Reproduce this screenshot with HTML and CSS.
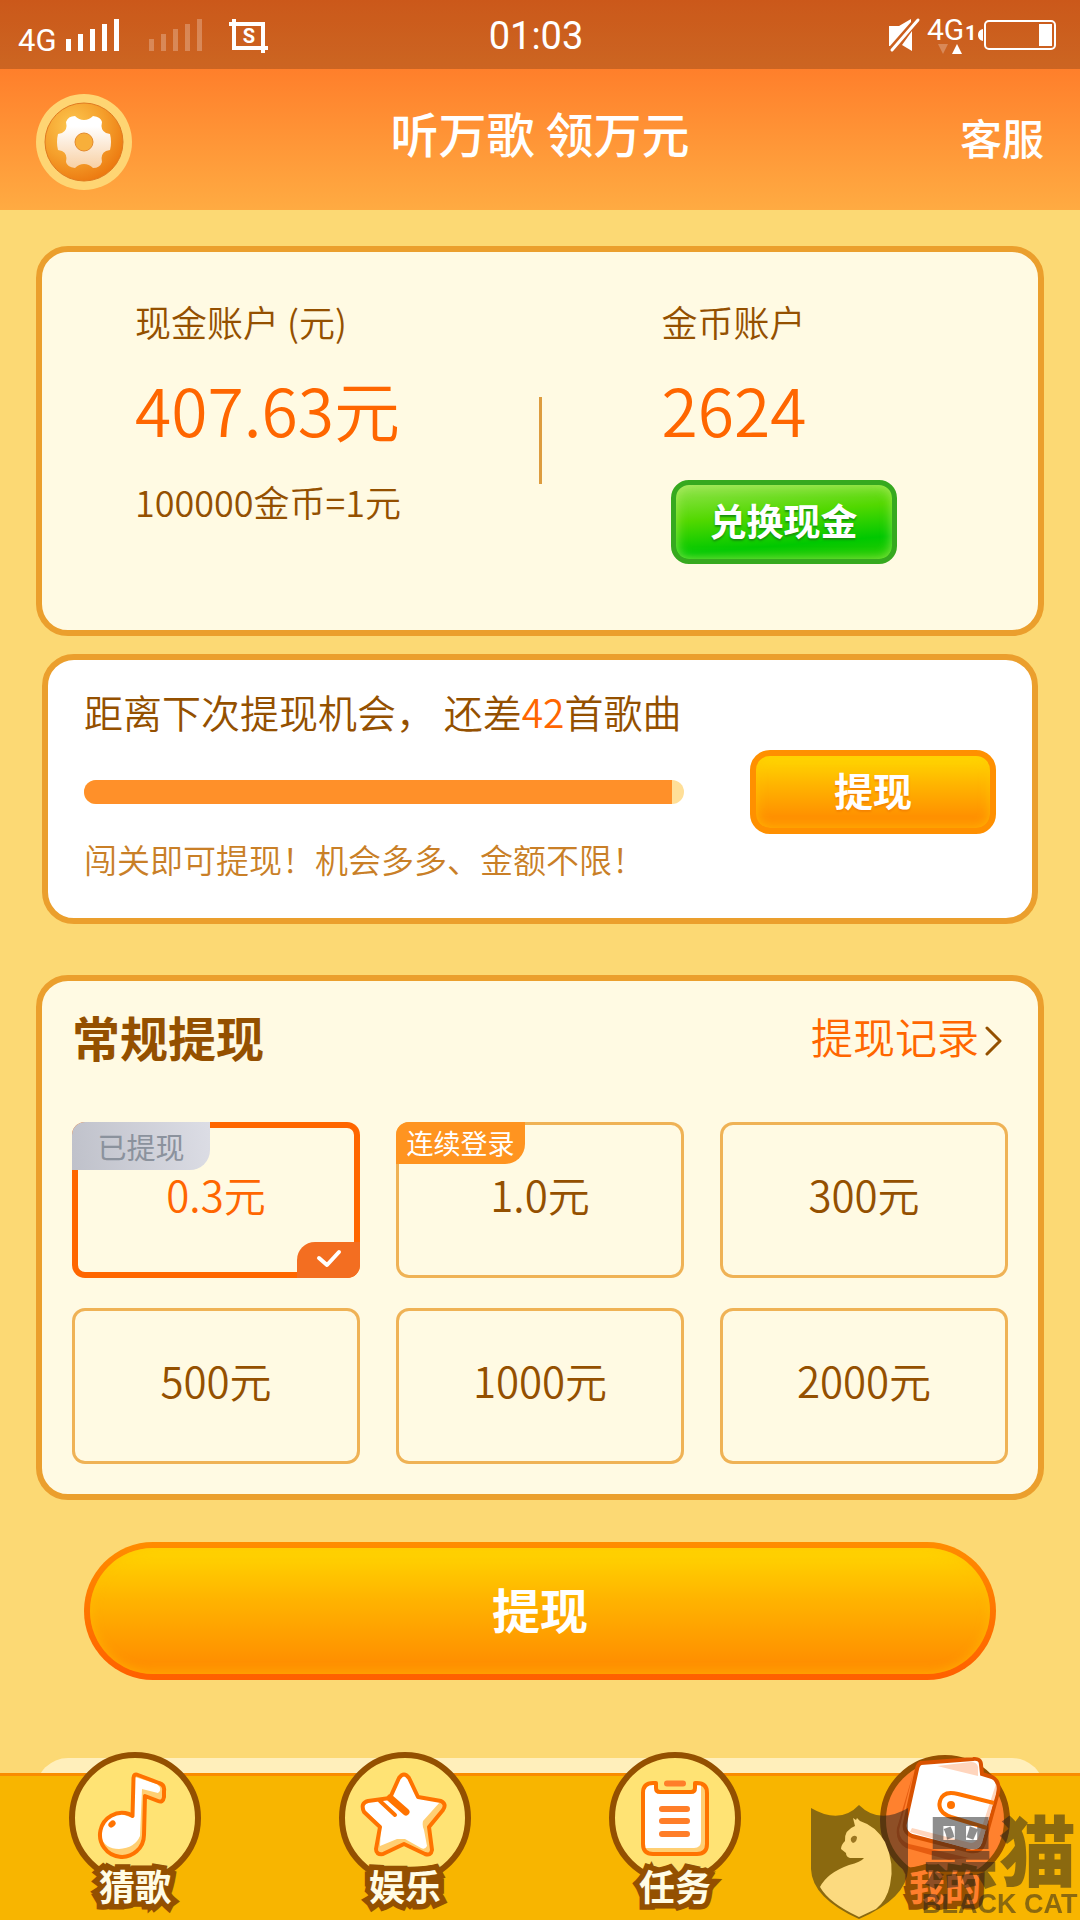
FILE: index.html
```html
<!DOCTYPE html>
<html lang="zh-CN">
<head>
    <meta charset="UTF-8">
    <meta name="viewport" content="width=device-width, initial-scale=1.0">
    <title>听万歌 领万元</title>
    <link rel="stylesheet" href="styles.css">
</head>
<body>
    <header class="top">
        <div class="status-bar">
            <svg class="status-left" width="256" height="48" viewBox="-4 -4 256 48">
                <text x="0" y="36" font-size="31">4G</text>
                <path d="M48 24h5v12h-5zM60 19h5v17h-5zM72 14h5v22h-5zM84 9h5v27h-5zM96 4h5v32h-5z"/>
                <path opacity=".25" d="M131 24h5v12h-5zM143 19h5v17h-5zM155 14h5v22h-5zM167 9h5v27h-5zM179 4h5v32h-5z"/>
                <path fill="none" stroke="#fff" stroke-width="4" d="M211 9h34v29M216 4v29h34"/>
                <text x="231" y="28" font-size="20" font-weight="700" text-anchor="middle">S</text>
            </svg>
            <span class="clock">01:03</span>
            <svg class="status-right" width="172" height="52" viewBox="0 -6 172 52">
                <path d="M3 11h10l12-7v3L4 31H3zM26 16v20l-10-6z"/>
                <path stroke="#fff" stroke-width="3" stroke-linecap="round" d="M6 35L32 5"/>
                <text x="41" y="25" font-size="30">4G</text>
                <text x="79" y="25" font-size="20" font-weight="700">1</text>
                <path opacity=".25" d="M52 29h10l-5 10z"/>
                <path d="M66 39h10l-5-10z"/>
                <path d="M97 14q-5 1-5 6t5 6z"/>
                <rect x="99" y="6" width="70" height="28" rx="4" fill="none" stroke="#fff" stroke-width="2"/>
                <path d="M153 9h13v22h-13z"/>
            </svg>
        </div>
        <div class="title-bar">
            <button class="settings" aria-label="设置">
                <svg width="96" height="96" viewBox="0 0 96 96">
                    <defs>
                        <radialGradient id="coin" cx=".35" cy=".3" r=".75">
                            <stop offset="0" stop-color="#fcc750"/>
                            <stop offset=".55" stop-color="#f5a02c"/>
                            <stop offset="1" stop-color="#ec780f"/>
                        </radialGradient>
                        <linearGradient id="gear" x1="0" y1="0" x2="0" y2="1">
                            <stop offset=".2" stop-color="#fff"/>
                            <stop offset="1" stop-color="#f8d0a4"/>
                        </linearGradient>
                    </defs>
                    <circle cx="48" cy="48" r="48" fill="#fed573"/>
                    <circle cx="48" cy="48" r="39" fill="url(#coin)" stroke="#e07a20"/>
                    <path fill="url(#gear)" d="M39 22Q43 26 48 26T57 22Q65 23 66 28Q64 36 70 39L74 40Q76 48 74 56L70 57Q64 60 66 68Q64 74 57 74Q53 70 48 70T39 74Q31 73 30 68Q32 60 26 57L22 56Q20 48 22 40L26 39Q32 36 30 28Q32 22 39 22Z"/>
                    <circle cx="48" cy="48" r="9" fill="#f8af3a" stroke="#e48b2c"/>
                </svg>
            </button>
            <h1>听万歌 领万元</h1>
            <a class="service" href="#">客服</a>
        </div>
    </header>

    <main>
        <section class="card accounts">
            <div class="account">
                <p class="label">现金账户 (元)</p>
                <p class="amount">407.63元</p>
                <p class="rate">100000金币=1元</p>
            </div>
            <div class="divider"></div>
            <div class="account coins">
                <p class="label">金币账户</p>
                <p class="amount">2624</p>
                <button class="btn-green">兑换现金</button>
            </div>
        </section>

        <section class="card chance">
            <div class="chance-info">
                <p class="chance-title">距离下次提现机会， 还差<em>42</em>首歌曲</p>
                <div class="progress"><div class="progress-fill" style="width: 98%"></div></div>
                <p class="chance-tip">闯关即可提现<span class="mark">！</span>机会多多、金额不限<span class="mark">！</span></p>
            </div>
            <button class="btn-orange">提现</button>
        </section>

        <section class="card withdraw">
            <div class="withdraw-head">
                <h2>常规提现</h2>
                <a class="record" href="#">提现记录
                    <svg width="18" height="30" viewBox="0 0 18 30"><path d="M2 2l13 13L2 28"/></svg>
                </a>
            </div>
            <div class="options">
                <label class="option">
                    <input type="radio" name="money" checked>
                    <span class="tag tag-done">已提现</span>
                    0.3元
                    <svg class="check" width="63" height="36" viewBox="0 0 63 36"><path d="M22 16l8 7L42 10"/></svg>
                </label>
                <label class="option">
                    <input type="radio" name="money">
                    <span class="tag tag-login">连续登录</span>
                    1.0元
                </label>
                <label class="option"><input type="radio" name="money">300元</label>
                <label class="option"><input type="radio" name="money">500元</label>
                <label class="option"><input type="radio" name="money">1000元</label>
                <label class="option"><input type="radio" name="money">2000元</label>
            </div>
        </section>

        <button class="btn-submit">提现</button>

        <section class="next-panel"></section>
    </main>

    <nav class="tabs">
        <a class="tab" href="#">
            <svg width="132" height="132" viewBox="0 0 132 132">
                <circle class="ring" cx="66" cy="66" r="63"/>
                <path fill="#ffcf73" d="M63.500 64L64.500 26Q65 21 69 23L90 31Q96 33 95 39L95 45Q94 51 89 49L76 44L75 83A22 22 0 1 1 60 62Z"/>
                <path fill="#fff" d="M64 66L66 25L88 32Q94 37 89 41L73 37L71 84Q66 96 50 97Q36 97 32 85Q32 63 52 62Z"/>
                <path class="line" d="M63.500 64L64.500 26Q65 21 69 23L90 31Q96 33 95 39L95 45Q94 51 89 49L76 44L75 83A22 22 0 1 1 60 62Z"/>
                <ellipse cx="43" cy="72" rx="4" ry="3" transform="rotate(-40 43 72)" fill="#ff7300"/>
            </svg>
            <span>猜歌</span>
        </a>
        <a class="tab" href="#">
            <svg width="132" height="132" viewBox="0 0 132 132">
                <circle class="ring" cx="66" cy="66" r="63"/>
                <path fill="#ffcf73" d="M60 26Q65 19 70 26L79 45L102 49Q108 52 104 58L90 75L93 98Q92 104 86 102L65 92L44 102Q37 103 37 97L41 75L25 60Q21 51 29 49L51 46Z"/>
                <path fill="#fff" d="M60 27Q65 20 70 27L79 46L101 50L84 69Q83 74 85 78L88 94Q86 98 82 96L66 87L58 87L41 94L42 74L26 58Q22 51 30 50L51 47Z"/>
                <path class="line" d="M60 26Q65 19 70 26L79 45L102 49Q108 52 104 58L90 75L93 98Q92 104 86 102L65 92L44 102Q37 103 37 97L41 75L25 60Q21 51 29 49L51 46Z"/>
                <path class="line" stroke-linecap="round" d="M41 49L56 63"/>
                <path class="line thick" stroke-linecap="round" d="M51 46L67 60"/>
            </svg>
            <span>娱乐</span>
        </a>
        <a class="tab" href="#">
            <svg width="132" height="132" viewBox="0 0 132 132">
                <circle class="ring" cx="66" cy="66" r="63"/>
                <rect x="34" y="31" width="64" height="71" rx="10" fill="#ffcf73"/>
                <path fill="#fff" d="M36 33H92V89Q92 96 85 96H36Z"/>
                <path fill="#ffe374" d="M48 26H85V40H48Z"/>
                <path class="line" d="M46 31H44Q34 31 34 41V92Q34 102 44 102H88Q98 102 98 92V41Q98 31 88 31H86V36Q86 40 82 40H51Q47 40 47 36V31Z"/>
                <path fill="#ffe374" d="M49 27H84V35Q84 37 82 37H51Q49 37 49 35Z"/>
                <path fill="none" stroke="#ff7e29" stroke-width="6" stroke-linecap="round" d="M58 31.500H74M53 57H78M53 69H78M53 82H78"/>
            </svg>
            <span>任务</span>
        </a>
        <a class="tab active" href="#">
            <svg width="132" height="132" viewBox="0 0 132 132">
                <circle class="ring" cx="66" cy="68" r="62"/>
                <path fill="#e65c10" d="M34 22L20 78Q20 88 30 92L90 106L70 108L27 96Q16 90 18 76Z"/>
                <path fill="#fff" stroke="#d95200" stroke-width="4" d="M42 11L94 7Q102 6 102 13L103 22L113 25Q121 29 119 40L105 91Q102 101 91 99L33 84Q24 80 26 71L38 17Q39 12 42 11Z"/>
                <path fill="#ffd5bd" d="M58 14L92 10Q98 10 99 15V24ZM117 32Q118 36 117 42L103 90Q100 99 90 97L31 80L33 76L92 91Q97 91 100 84Z"/>
                <path fill="none" stroke="#ff7300" stroke-width="4" d="M115 51L79 42Q64 38 61 49Q58 60 72 65L108 76"/>
                <circle cx="72" cy="53" r="4" fill="#ff7300"/>
            </svg>
            <span>我的</span>
        </a>
    </nav>

    <div class="watermark">
        <svg width="97" height="115" viewBox="0 0 97 115">
            <path fill="#1e1e1e" fill-opacity=".5" d="M0 3Q29 20 48 0Q68 20 97 3V64Q96 93 48 114Q1 93 0 64Z"/>
            <path fill="#fcda7f" d="M42 13L45 15L46 13L49 16Q65 21 74 37Q84 59 79 80Q76 95 65 104L48 112Q18 98 9 82Q16 68 38 60Q50 57 53 53L39 53Q35 52 35 48L30 44Q30 40 34 36Q33 25 44 21Z"/>
            <path fill="#9b7621" d="M40 33Q43 29 46 32Q46 37 42 38Q39 36 40 33Z"/>
        </svg>
        <div class="watermark-text">
            <strong>黑猫</strong>
            <span>BLACK CAT</span>
        </div>
    </div>
</body>
</html>
```

FILE: styles.css
```css
* { box-sizing: border-box; margin: 0; padding: 0; }
body { display: flex; flex-direction: column; height: 100vh; font-family: 'Noto Sans CJK SC', sans-serif; font-weight: 350; color: #945000; background-color: #fcd974; overflow: hidden; }
a { color: inherit; text-decoration: none; }
button { border: none; color: #fff; font-family: inherit; font-weight: 700; cursor: pointer; }
svg { display: block; flex: none; }

/* Header */
.top { color: #fff; background: linear-gradient(#fe6f21 0, #ff7f2b 69px, #ffab42 100%); }
.status-bar { display: grid; grid-template-columns: 1fr auto 1fr; align-items: center; height: 69px; padding: 0 22px 0 14px; background-color: rgba(0,0,0,0.2); font-family: Roboto, sans-serif; font-weight: 400; }
.status-bar svg { fill: #fff; }
.status-right { justify-self: end; }
.clock { padding-top: 3px; font-size: 38px; }
.title-bar { display: grid; grid-template-columns: 1fr auto 1fr; align-items: center; height: 141px; padding: 4px 36px 0; }
.settings { width: 96px; height: 96px; background: none; }
h1 { padding-bottom: 20px; font-size: 48px; line-height: 60px; font-weight: 500; }
.service { justify-self: end; padding-bottom: 10px; font-size: 42px; line-height: 60px; font-weight: 500; }

/* Cards */
main { flex: 1; min-height: 0; padding: 36px 36px 0; overflow-y: auto; scrollbar-width: none; }
.card { border: 6px solid #eb9f2d; border-radius: 32px; background-color: #fffae3; }

.accounts { display: grid; grid-template-columns: 1fr 3px 1fr; align-items: start; min-height: 390px; padding-top: 45px; }
.account { padding-left: 93px; }
.coins { padding-left: 120px; }
.label, .rate { font-size: 36px; line-height: 48px; }
.amount { margin-top: 21px; font-size: 66px; line-height: 84px; color: #ff6600; }
.rate { margin-top: 27px; }
.divider { height: 87px; margin-top: 100px; background-color: #dd9c3f; }
.btn-green { width: 226px; height: 84px; margin: 30px 0 0 9px; border: 5px solid #36a91f; border-radius: 18px; font-size: 37px; line-height: 48px; padding-bottom: 4px; text-shadow: 0 2px 2px #16930c; background: linear-gradient(175deg, #95e452 0, #52d800 40%, #00c800 75%, #2ccc00 100%); box-shadow: inset 0 0 12px rgba(190,240,110,0.7); }

.chance { display: flex; align-items: center; justify-content: space-between; margin: 18px 6px 0; padding: 27px 36px 21px; min-height: 270px; background-color: #fff; }
.chance-info { align-self: flex-start; width: 600px; }
.chance-title { font-size: 39px; line-height: 48px; white-space: nowrap; }
.chance-title em { font-style: normal; color: #ff6600; }
.progress { height: 24px; margin-top: 45px; border-radius: 12px; background-color: #ffdf98; overflow: hidden; }
.progress-fill { height: 100%; background-color: #ff9029; }
.chance-tip { margin-top: 34px; font-size: 33px; line-height: 42px; color: #c97f27; }
.mark { font-family: 'Noto Sans CJK TC', sans-serif; }
.btn-orange { width: 246px; height: 84px; border: 6px solid #ff9000; border-radius: 20px; font-size: 39px; line-height: 48px; padding-bottom: 6px; text-shadow: 0 2px 2px #f58400; background: linear-gradient(#ffd800 0, #ffb400 40%, #ff9000 85%); box-shadow: inset 0 0 12px rgba(255,200,0,0.7); }

.withdraw { margin-top: 51px; padding: 25px 30px 30px; }
.withdraw-head { display: flex; align-items: center; justify-content: space-between; margin-bottom: 56px; }
h2 { font-size: 48px; line-height: 60px; font-weight: 700; }
.record { display: flex; align-items: center; gap: 6px; padding-right: 5px; font-size: 42px; line-height: 60px; color: #ff6600; }
.record svg { margin-top: 10px; fill: none; stroke: #945000; stroke-width: 3; stroke-linecap: round; stroke-linejoin: round; }
.options { display: grid; grid-template-columns: repeat(3, 1fr); gap: 30px 36px; }
.option { position: relative; display: flex; align-items: center; justify-content: center; height: 156px; padding-bottom: 14px; border-radius: 13px; box-shadow: inset 0 0 0 3px #efb255; font-size: 42px; overflow: hidden; cursor: pointer; }
.option input { position: absolute; inset: 0; appearance: none; cursor: pointer; }
.option:has(input:checked) { color: #ff6600; box-shadow: inset 0 0 0 6px #ff6600; }
.tag { position: absolute; top: 0; left: 0; border-radius: 0 0 20px 0; font-weight: 400; text-align: center; }
.tag-done { width: 138px; font-size: 29px; line-height: 48px; color: #8b929d; background: linear-gradient(80deg, #bfc1ca, #dcdde5); }
.tag-login { width: 129px; font-size: 27px; line-height: 42px; color: #fff; background-color: #ff9420; }
.check { position: absolute; right: 0; bottom: 0; border-radius: 18px 0 0 0; background-color: #f36e21; fill: none; stroke: #fff; stroke-width: 4; stroke-linecap: round; stroke-linejoin: round; }

.btn-submit { display: block; width: calc(100% - 96px); height: 138px; margin: 42px auto 0; border: 6px solid transparent; border-radius: 69px; font-size: 48px; line-height: 60px; padding-bottom: 6px; background: linear-gradient(#ffd600 0, #ffb400 40%, #ff9000 90%) padding-box, linear-gradient(#ff8c00, #ff6000) border-box; box-shadow: inset 0 0 12px rgba(255,190,0,0.7); }
.next-panel { height: 120px; margin-top: 78px; border-radius: 32px; background-color: #ffefbb; }

/* Bottom tabs */
.tabs { position: relative; display: grid; grid-template-columns: repeat(4, 1fr); height: 147px; border-top: 3px solid #f98c00; background-color: #f8b500; }
.tab { display: flex; flex-direction: column; align-items: center; margin-top: -24px; }
.tab span { position: relative; margin-top: -17px; font-size: 36px; line-height: 36px; font-weight: 700; color: #fffce6; -webkit-text-stroke: 11px #945000; paint-order: stroke fill; stroke-linejoin: round; }
.tab.active span { color: #ff7e2c; }
.ring { fill: #ffe374; stroke: #945000; stroke-width: 6; }
.active .ring { fill: #ff812e; }
.line { fill: none; stroke: #ff7300; stroke-width: 4; stroke-linejoin: round; }
.thick { stroke-width: 7; }

/* Watermark over the page corner */
.watermark { position: fixed; right: 0; bottom: 0; display: flex; align-items: flex-end; gap: 14px; pointer-events: none; }
.watermark-text { display: flex; flex-direction: column; width: 158px; color: rgba(30,30,30,0.5); }
.watermark strong { font-size: 77px; line-height: 82px; font-weight: 900; white-space: nowrap; }
.watermark span { font-family: 'Liberation Sans', sans-serif; font-size: 27px; line-height: 31px; font-weight: 700; white-space: nowrap; }
```
